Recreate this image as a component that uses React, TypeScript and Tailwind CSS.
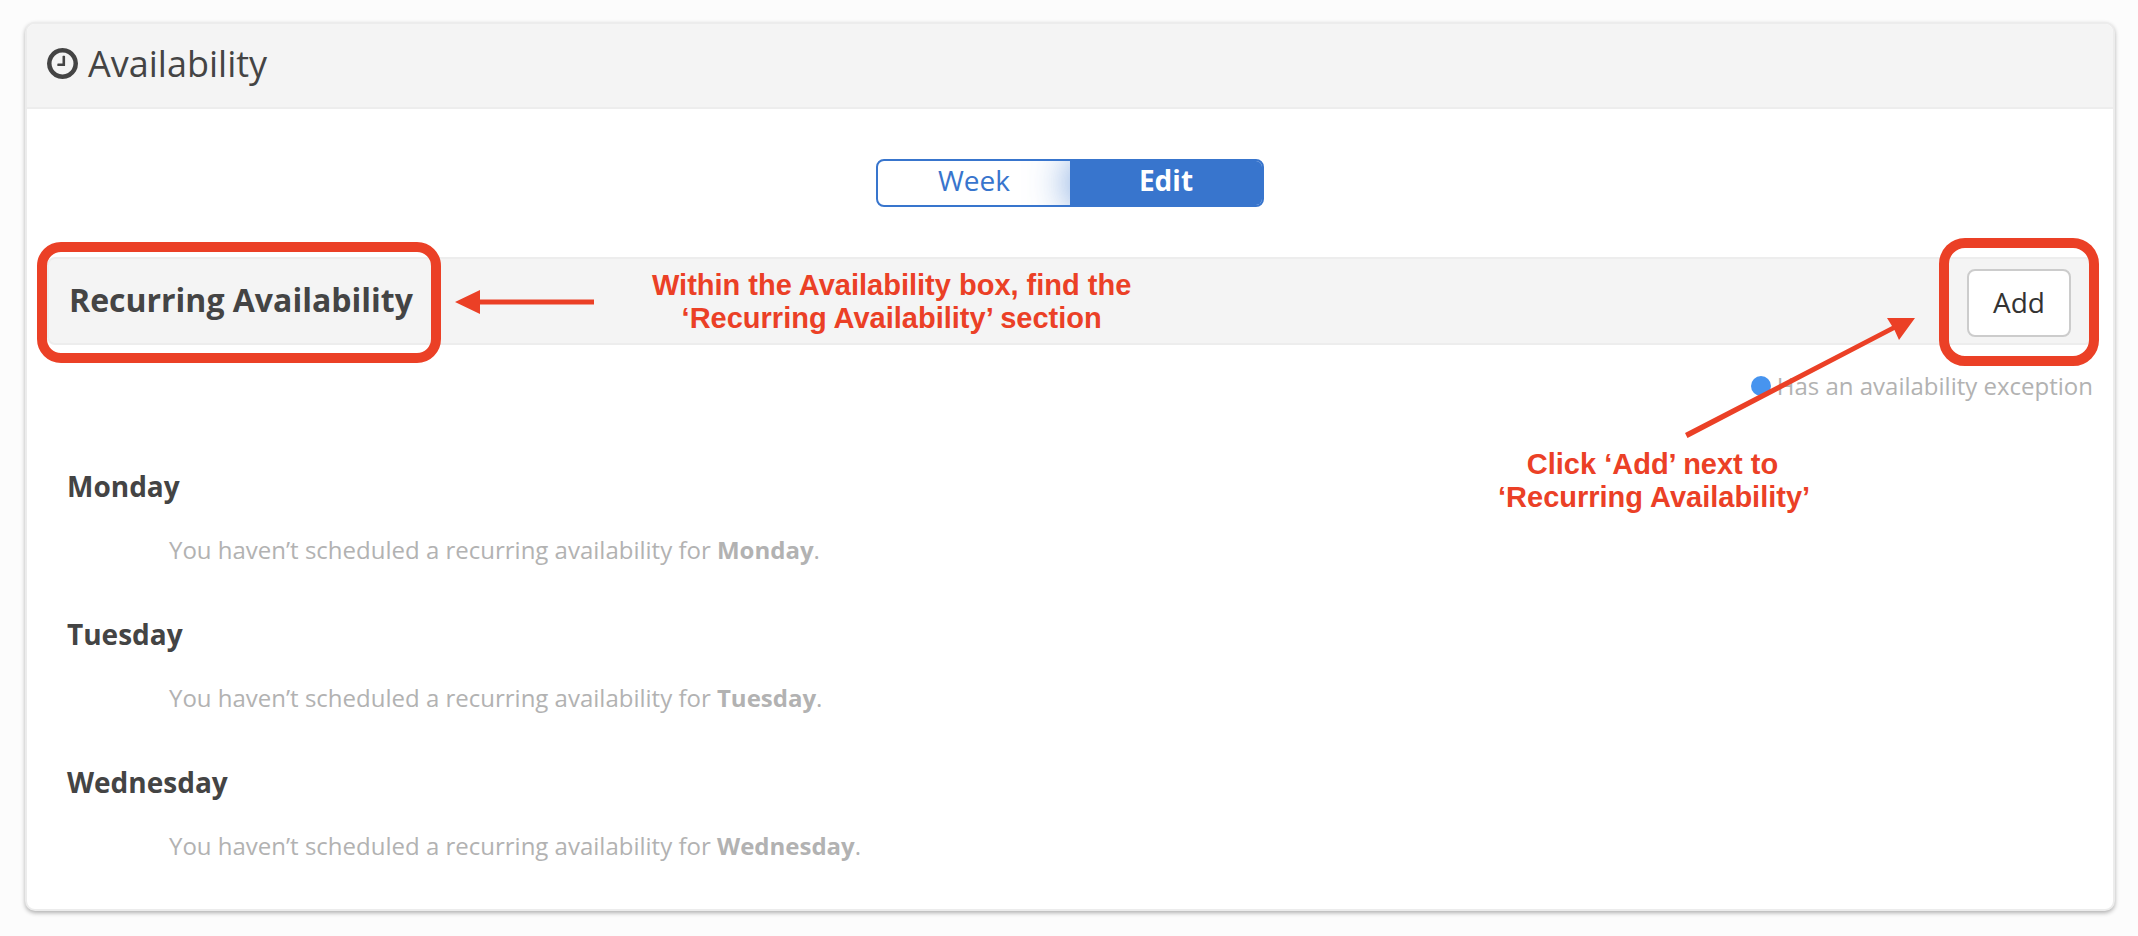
const days = ["Monday", "Tuesday", "Wednesday"];

function ClockIcon() {
  return (
    <svg viewBox="0 128 1536 1536" className="size-[31px] fill-current" aria-hidden="true">
      <path d="M896 544v448q0 14-9 23t-23 9h-320q-14 0-23-9t-9-23v-64q0-14 9-23t23-9h224v-352q0-14 9-23t23-9h64q14 0 23 9t9 23zm416 352q0-148-73-273t-198-198-273-73-273 73-198 198-73 273 73 273 198 198 273 73 273-73 198-198 73-273zm224 0q0 209-103 385.5t-279.5 279.5-385.5 103-385.5-103-279.5-279.5-103-385.5 103-385.5 279.5-279.5 385.5-103 385.5 103 279.5 279.5 103 385.5z" />
    </svg>
  );
}

// Highlight, arrow and hint for the section title
function TitleNote() {
  return (
    <div className="pointer-events-none absolute top-[-17px] left-[-12px] flex items-start text-[#eb4026]">
      <div className="h-[121px] w-[404px] rounded-[24px] border-10 border-current" />
      <svg viewBox="0 0 140 26" className="mt-[47px] ml-[14px] h-[26px] w-[140px] fill-current" aria-hidden="true">
        <path d="M0 13 25 1v9.500h114v5H25V25z" />
      </svg>
      <p className="mt-[27px] ml-[57px] text-center font-['Liberation_Sans',sans-serif] text-[29px] leading-[33px] font-bold whitespace-nowrap">
        Within the Availability box, find the
        <br />
        ‘Recurring Availability’ section
      </p>
    </div>
  );
}

// Highlight, arrow and hint for the Add button
function AddNote() {
  return (
    <div className="pointer-events-none absolute top-[-21px] right-[-8px] flex items-start text-[#eb4026]">
      <div className="mt-[79px] mr-[22px] w-[419px]">
        <svg viewBox="0 0 232 122" className="ml-[186px] h-[122px] w-[232px] fill-current" aria-hidden="true">
          <path d="M231 1 215 23 210.500 13 3.500 121 1 116 208 9 203 1z" />
        </svg>
        <p className="mt-[9px] w-[309px] text-center font-['Liberation_Sans',sans-serif] text-[29px] leading-[33px] font-bold whitespace-nowrap">
          Click ‘Add’ next to
          <br />
          ‘Recurring Availability’
        </p>
      </div>
      <div className="h-[128px] w-[160px] rounded-[26px] border-10 border-current" />
    </div>
  );
}

export default function App() {
  return (
    <div className="min-h-screen bg-[#fcfcfc] px-[25px] pt-[22px] pb-[25px] pr-[23px] font-['Open_Sans',sans-serif] text-[#444444]">
      <div className="rounded-[10px] border-2 border-[#ececec] bg-white shadow-[0_2px_4px_rgba(0,0,0,0.3)]">
        <div className="flex h-[85px] items-center gap-2.5 rounded-t-[8px] border-b-2 border-[#ededed] bg-[#f4f4f4] px-5 pb-1">
          <ClockIcon />
          <h1 className="text-[36px] leading-[48px]">Availability</h1>
        </div>

        <div className="px-5 pt-[50px] pb-[47px]">
          <div className="mx-auto flex h-[48px] w-[388px] overflow-hidden rounded-[8px] border-2 border-[#3875cd] text-[28px] leading-[38px]">
            <button className="flex-1 pb-1.5 text-[#3875cd]">Week</button>
            <button className="flex-1 bg-[#3875cd] pb-1.5 font-bold text-white shadow-[0_0_40px_rgba(56,117,205,0.8)]">Edit</button>
          </div>

          <div className="relative z-10 mt-[50px] flex items-center justify-between rounded-[8px] border-2 border-[#ededed] bg-[#f4f4f4] px-5 pt-[10px] pb-[6px]">
            <h2 className="pb-1.5 text-[32px] leading-[44px] font-bold">Recurring Availability</h2>
            <button className="h-[68px] rounded-[8px] border-2 border-[#cccccc] bg-white px-6 pb-0.5 text-[28px] text-[#333333]">Add</button>
            <TitleNote />
            <AddNote />
          </div>

          <div className="mt-[25px] flex items-center justify-end gap-1.5 text-[24px] leading-8 text-[#b2b2b2]">
            <span className="size-5 rounded-full bg-[#4794ef]" />
            <span>Has an availability exception</span>
          </div>

          <div className="mt-16 flex flex-col gap-12 pl-5">
            {days.map((day) => (
              <div key={day}>
                <h3 className="text-[28px] leading-10 font-bold">{day}</h3>
                <p className="mt-7 pl-[102px] text-[24px] leading-8 text-[#b2b2b2]">
                  You haven’t scheduled a recurring availability for <strong>{day}</strong>.
                </p>
              </div>
            ))}
          </div>
        </div>
      </div>
    </div>
  );
}
